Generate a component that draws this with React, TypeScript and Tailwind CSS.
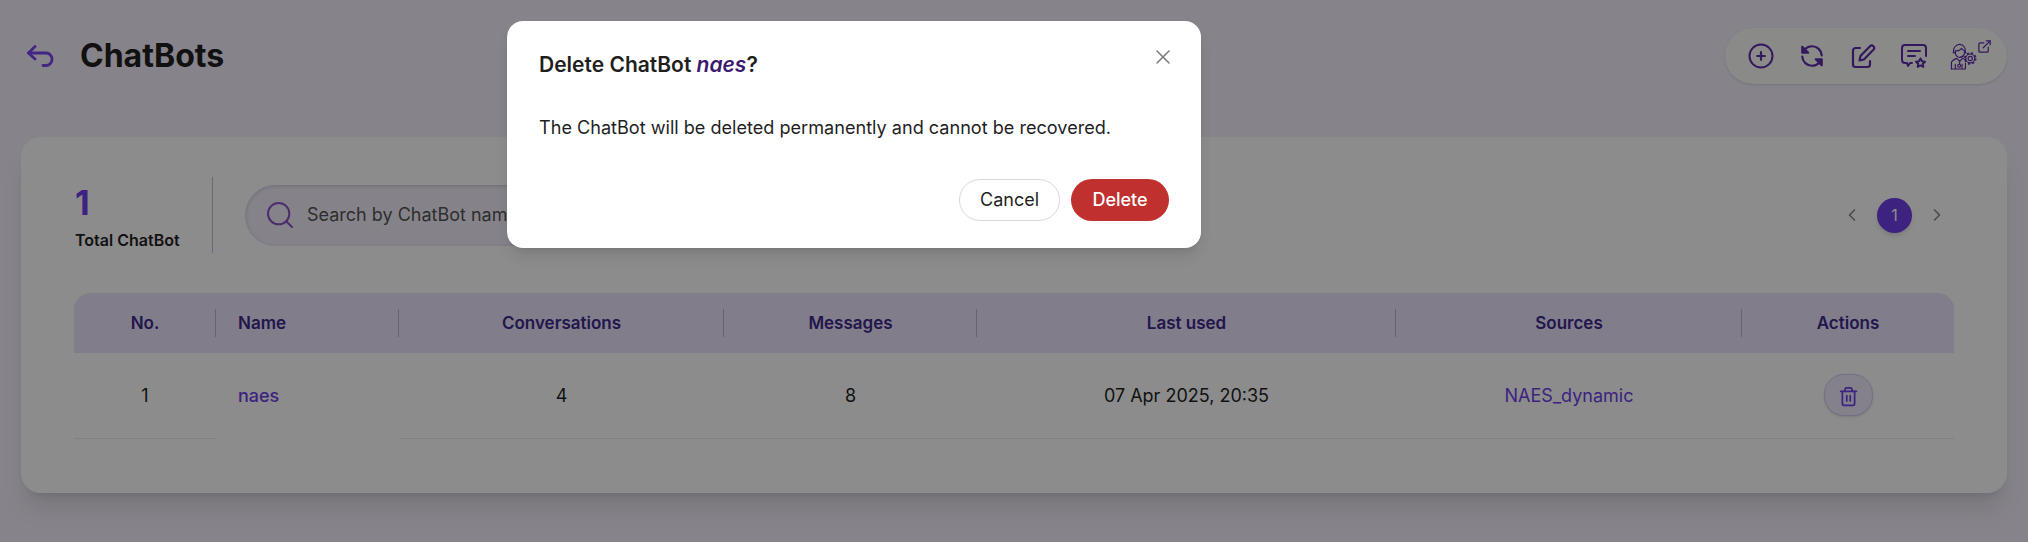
import { ChevronLeft, ChevronRight, ExternalLink, Search, Trash2, X } from "lucide-react";

const columns = [
  { label: "No.", width: "w-[142px]", align: "text-center" },
  { label: "Name", width: "w-[183px]", align: "text-left pl-[22px]" },
  { label: "Conversations", width: "w-[325px]", align: "text-center" },
  { label: "Messages", width: "w-[253px]", align: "text-center" },
  { label: "Last used", width: "w-[419px]", align: "text-center" },
  { label: "Sources", width: "w-[346px]", align: "text-center" },
  { label: "Actions", width: "w-[212px]", align: "text-center" },
];

function BackIcon() {
  return (
    <svg viewBox="0 0 27 22" className="w-[27px] h-[22px]" fill="none" stroke="currentColor" strokeWidth="2.8" strokeLinecap="round" strokeLinejoin="round">
      <path d="M8 1.500 1.500 8 8 14" />
      <path d="M1.500 8H19a6 6 0 0 1 6 6.500 6 6 0 0 1-6 6h-3" />
    </svg>
  );
}

function AddIcon() {
  return (
    <svg viewBox="0 0 26 26" className="w-[26px] h-[26px]" fill="none" stroke="currentColor" strokeWidth="2" strokeLinecap="round">
      <circle cx="13" cy="13" r="11.500" />
      <path d="M13 9.200v7.600M9.200 13h7.600" strokeWidth="2.200" />
    </svg>
  );
}

function RefreshIcon() {
  return (
    <svg viewBox="0 0 24 24" className="w-[26px] h-[26px]" fill="none" stroke="currentColor" strokeWidth="2" strokeLinecap="round" strokeLinejoin="round">
      <path d="M21 11.500a9 9 0 0 0-9-8.500 9.500 9.500 0 0 0-6.700 2.800L3.500 8" />
      <path d="M3 12.500a9 9 0 0 0 9 8.500 9.500 9.500 0 0 0 6.700-2.800l1.800-2.200" />
      <path d="M3 3.500V9h5.500z" fill="currentColor" />
      <path d="M21 20.500V15h-5.500z" fill="currentColor" />
    </svg>
  );
}

function EditIcon() {
  return (
    <svg viewBox="0 0 26 26" className="w-[26px] h-[26px]" fill="none" stroke="currentColor" strokeWidth="2.200" strokeLinecap="round" strokeLinejoin="round">
      <path d="M10 5H5.500A2.500 2.500 0 0 0 3 7.500v14A2.500 2.500 0 0 0 5.500 24h12a2.500 2.500 0 0 0 2.500-2.500V18" />
      <path d="M9.500 17.500l1-4.500L20 3.300a2.400 2.400 0 0 1 3.400 3.400L13.900 16.500z" />
    </svg>
  );
}

function FeedbackIcon() {
  return (
    <svg viewBox="0 0 26 26" className="w-[26px] h-[26px]" fill="none" stroke="currentColor" strokeWidth="2" strokeLinecap="round" strokeLinejoin="round">
      <path d="M11 20H9l-2 3-1-3H4a3 3 0 0 1-3-3V5a3 3 0 0 1 3-3h18a3 3 0 0 1 3 3v8" />
      <path d="M7 8h12M7 13h7" />
      <path d="m19.500 15.500 1.500 2.800 3 .4-2.200 2.100.5 3-2.800-1.400-2.800 1.400.5-3-2.200-2.100 3-.4z" />
    </svg>
  );
}

function SupportIcon() {
  return (
    <svg viewBox="0 0 28 28" className="w-[27px] h-[27px]" fill="none" stroke="currentColor" strokeWidth="1.200" strokeLinecap="round" strokeLinejoin="round">
      <path d="M3.500 10C3 5 6 1.500 10 1.500S16.500 5 16 10" />
      <path d="M5.500 8c2.500.5 5-.5 6.500-2.500.8 1.300 2 2.200 3 2.500v2c0 2.500-2.500 5-5 5s-4.500-2.500-4.500-5z" />
      <path d="M3.500 10h2M15 10h1.500M14 13.500c-1 1-2 1.200-3.500 1.200" />
      <path d="M1.500 27v-6.500c0-2.500 3-3.500 5.500-4.500l3 3 3-3c1 .4 2 .7 2.800 1.200" />
      <path d="M1.500 27H16v-6M5.500 27v-5M12.500 27v-5M10 19v3" />
      <circle cx="9.500" cy="23.500" r="1.500" />
      <circle cx="21" cy="16" r="2.200" />
      <circle cx="21" cy="16" r="4.600" />
      <circle cx="21" cy="16" r="5.600" strokeWidth="1.800" strokeDasharray="2.200 2.200" strokeLinecap="butt" />
    </svg>
  );
}

export default function App() {
  return (
    <div className="relative h-[542px] overflow-hidden bg-[#f4effb] font-['Inter',sans-serif] text-[#1f1f1f]">
      <header className="h-[137px] pl-[27px] pr-[21px] pt-[28px] flex items-start justify-between">
        <div className="flex items-center gap-[26px] h-[56px] text-[#7a45f0]">
          <BackIcon />
          <h1 className="text-[32px] font-bold leading-none text-[#1f1f1f]">ChatBots</h1>
        </div>
        <div className="relative flex items-center h-[56px] w-[282px] pl-[23px] rounded-full bg-[#fbfbf7] text-[#602dab] shadow-sm">
          <AddIcon />
          <div className="ml-[25px]"><RefreshIcon /></div>
          <div className="ml-[25px]"><EditIcon /></div>
          <div className="ml-[25px]"><FeedbackIcon /></div>
          <div className="ml-[23px]"><SupportIcon /></div>
          <ExternalLink className="absolute right-[15px] top-[11px] w-[15px] h-[15px]" strokeWidth={2} />
        </div>
      </header>

      <main className="mx-[21px] h-[356px] rounded-[20px] bg-white shadow-xl px-[53px] pt-[39px]">
        <div className="flex items-center h-[78px]">
          <div className="w-[139px] h-[76px] flex flex-col justify-center pl-[1px] pt-[4px] border-r border-[#c9b8ee] mr-[32px]">
            <div className="text-[34px] font-bold leading-[38px] text-[#6f3ee9]">1</div>
            <div className="text-base font-semibold leading-5 mt-[8px]">Total ChatBot</div>
          </div>
          <div className="flex items-center w-[360px] h-[61px] pl-[19px] gap-[11px] rounded-full bg-[#f3effa] shadow-[inset_0_1px_4px_rgba(80,60,120,0.25)]">
            <Search className="w-8 h-8 text-[#8a4fc8]" strokeWidth={1.5} />
            <span className="text-lg text-[#555]">Search by ChatBot name</span>
          </div>
          <div className="ml-auto mr-[7px] flex items-center gap-[15px]">
            <ChevronLeft className="w-5 h-5 text-[#8a8a8a]" />
            <div className="w-[35px] h-[35px] rounded-full bg-[#6f3ee9] text-white text-base flex items-center justify-center shadow-md">1</div>
            <ChevronRight className="w-5 h-5 text-[#8a8a8a]" />
          </div>
        </div>

        <table className="mt-[39px] w-[1880px] table-fixed border-collapse">
          <thead>
            <tr className="h-[60px] bg-[#ebe4fb]">
              {columns.map((c, i) => (
                <th
                  key={c.label}
                  className={`${c.width} ${c.align} relative pt-px text-[17px] font-semibold text-[#3e2a8c] ${i === 0 ? "rounded-tl-[16px]" : ""} ${i === 6 ? "rounded-tr-[16px]" : ""}`}
                >
                  {c.label}
                  {i < 6 && <span className="absolute right-0 top-[16px] h-[28px] w-px bg-[#bdb6c9]" />}
                </th>
              ))}
            </tr>
          </thead>
          <tbody>
            <tr className="h-[85px] text-lg">
              <td className="pt-px text-center border-b border-[#ececec]">1</td>
              <td className="pt-px pl-[22px] font-medium text-[#6f3ee9]">naes</td>
              <td className="pt-px text-center border-b border-[#ececec]">4</td>
              <td className="pt-px text-center border-b border-[#ececec]">8</td>
              <td className="pt-px text-center border-b border-[#ececec]">07 Apr 2025, 20:35</td>
              <td className="pt-px text-center border-b border-[#ececec] text-[#6f3ee9]">NAES_dynamic</td>
              <td className="border-b border-[#ececec]">
                <div className="mx-auto w-[49px] h-[42px] rounded-[20px] pt-[2px] bg-[#f1ecfb] border border-[#d8c9f5] shadow-sm flex items-center justify-center text-[#6f3ee9]">
                  <Trash2 className="w-[21px] h-[21px]" />
                </div>
              </td>
            </tr>
          </tbody>
        </table>
      </main>

      <div className="absolute inset-0 bg-black/45" />

      <div className="absolute left-[507px] top-[21px] w-[694px] h-[227px] rounded-2xl bg-white shadow-lg px-8 pt-[30px]">
        <h2 className="text-[21px] font-semibold leading-7">
          Delete ChatBot <em className="text-[#3b1a6e]">naes</em>?
        </h2>
        <X className="absolute right-[26px] top-[24px] w-[24px] h-[24px] text-[#7a7a7a]" strokeWidth={1.5} />
        <p className="mt-[36px] text-[18.1px] leading-6">The ChatBot will be deleted permanently and cannot be recovered.</p>
        <div className="absolute right-[32px] bottom-[27px] flex gap-[11px]">
          <button className="w-[101px] h-[42px] rounded-full border border-[#d9d9d9] bg-white text-lg">Cancel</button>
          <button className="w-[98px] h-[42px] rounded-full bg-[#c0302e] text-white text-lg font-medium">Delete</button>
        </div>
      </div>
    </div>
  );
}
